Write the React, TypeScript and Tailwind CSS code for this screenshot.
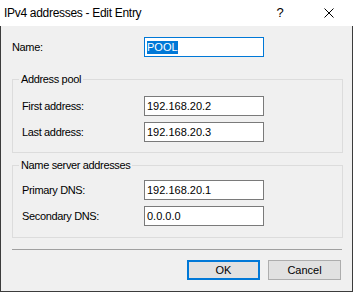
export default function App() {
  const label = "text-[11px] leading-[13px] tracking-[-0.35px] text-black";
  const field =
    "h-[20px] w-[120px] border border-[#7a7a7a] bg-white pl-[2px] flex items-center text-[11px] leading-[13px] text-black";

  return (
    <div className="w-[353px] h-[292px] flex flex-col bg-[#f0f0f0] font-['Liberation_Sans',Arial,sans-serif] select-none">
      {/* title bar */}
      <div className="h-[26px] shrink-0 bg-white flex items-center pl-[4px]">
        <span className="text-[12px] tracking-[-0.3px] text-black flex-1">IPv4 addresses - Edit Entry</span>
        <span className="w-[10px] text-center text-[13px] text-black mr-[39px]">?</span>
        <svg width="10" height="10" viewBox="0 0 10 10" className="mr-[19px]">
          <path d="M0.5 0.5 L9.5 9.5 M9.5 0.5 L0.5 9.5" stroke="#000" strokeWidth="1" />
        </svg>
      </div>

      {/* body */}
      <div className="flex-1 flex flex-col border-l border-r border-b border-[#3c3c3c] pl-[11px] pr-[9px]">
        <div className="mt-[11px] flex items-center">
          <span className={`${label} w-[132px]`}>Name:</span>
          <div className="h-[20px] w-[120px] border border-[#0078d7] bg-white pl-[2px] flex items-center">
            <span className="bg-[#0078d7] text-white text-[11px] leading-[13px]">POOL</span>
          </div>
        </div>

        <div className="relative mt-[22px] border border-[#dcdcdc] pt-[16px] pb-[10px] pl-[9px] flex flex-col gap-[6px]">
          <span className={`${label} absolute top-[-7px] left-[6px] px-[2px] bg-[#f0f0f0]`}>Address pool</span>
          <div className="flex items-center">
            <span className={`${label} w-[122px]`}>First address:</span>
            <div className={field}>192.168.20.2</div>
          </div>
          <div className="flex items-center">
            <span className={`${label} w-[122px]`}>Last address:</span>
            <div className={field}>192.168.20.3</div>
          </div>
        </div>

        <div className="relative mt-[12px] border border-[#dcdcdc] pt-[14px] pb-[11px] pl-[9px] flex flex-col gap-[6px]">
          <span className={`${label} absolute top-[-7px] left-[6px] px-[2px] bg-[#f0f0f0]`}>Name server addresses</span>
          <div className="flex items-center">
            <span className={`${label} w-[122px]`}>Primary DNS:</span>
            <div className={field}>192.168.20.1</div>
          </div>
          <div className="flex items-center">
            <span className={`${label} w-[122px]`}>Secondary DNS:</span>
            <div className={field}>0.0.0.0</div>
          </div>
        </div>

        <div className="mt-[11px] h-px bg-[#a0a0a0] mr-[1px]" />

        <div className="mt-[10px] flex justify-end gap-[8px] mr-[2px]">
          <button className="h-[20px] w-[73px] border-2 border-[#0078d7] bg-[#e1e1e1] text-[11px] text-black flex items-center justify-center">
            OK
          </button>
          <button className="h-[20px] w-[73px] border border-[#adadad] bg-[#e1e1e1] text-[11px] text-black flex items-center justify-center">
            Cancel
          </button>
        </div>
      </div>
    </div>
  );
}
